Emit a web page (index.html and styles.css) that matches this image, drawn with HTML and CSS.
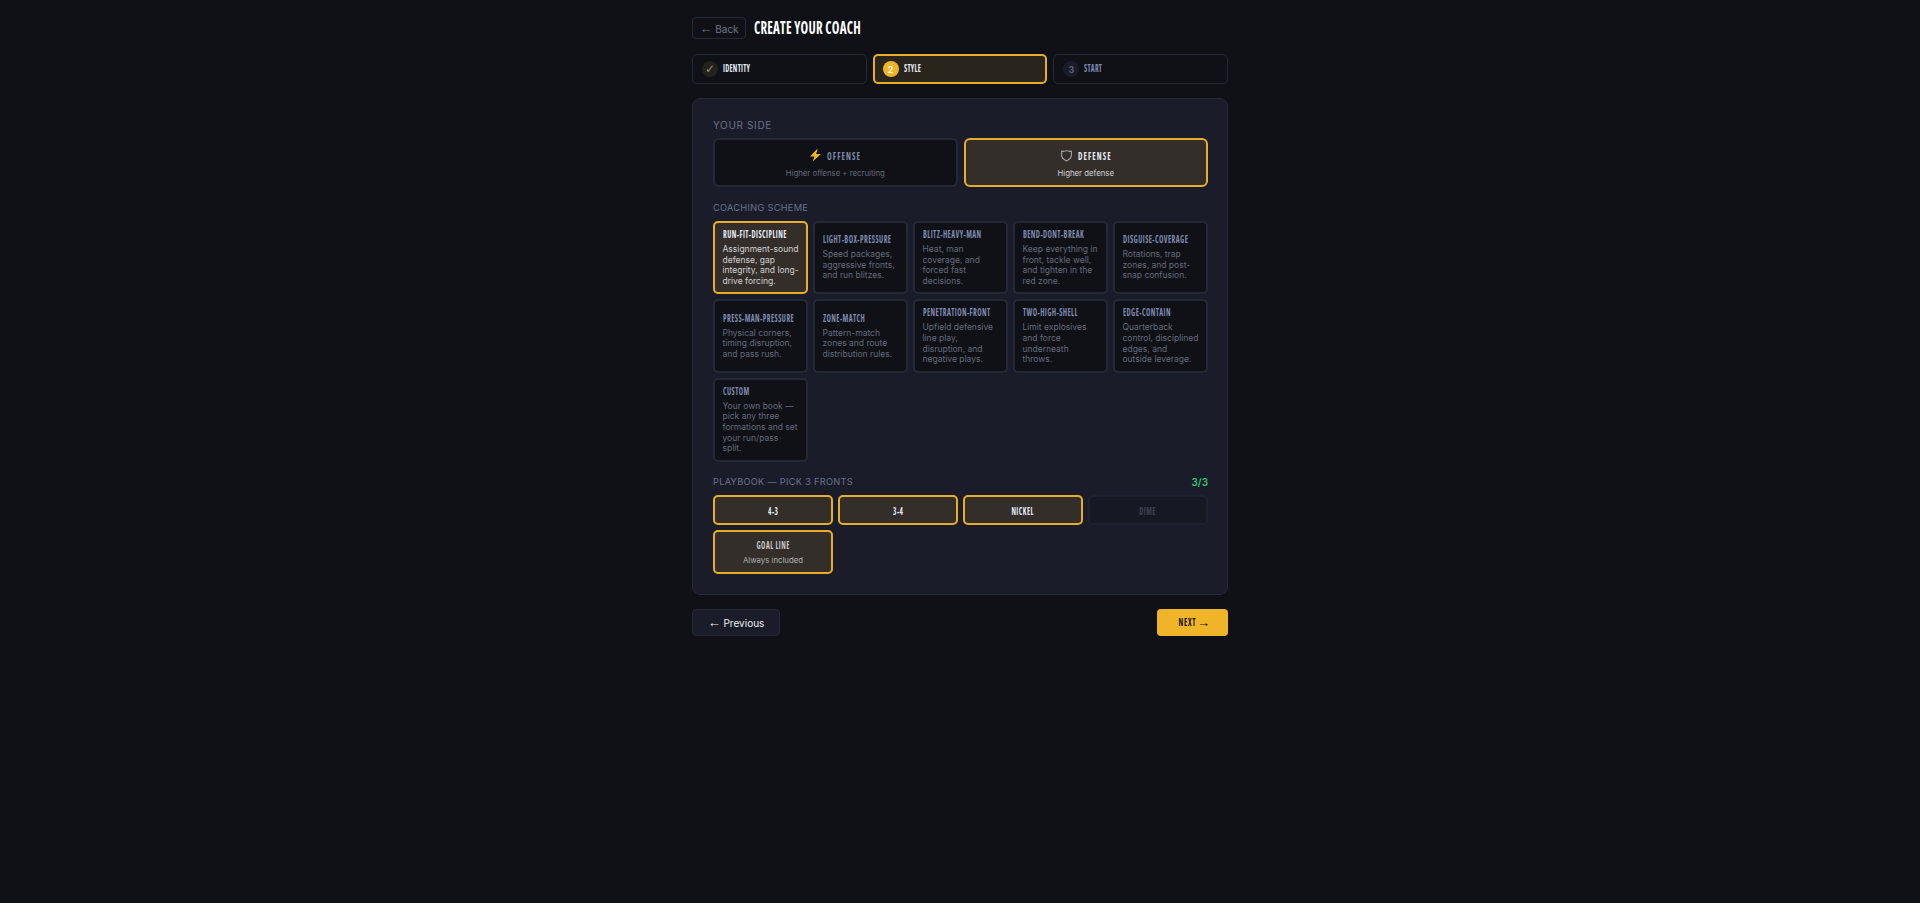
FILE: index.html
```html
<!DOCTYPE html>
<html lang="en">
<head>
    <meta charset="UTF-8">
    <meta name="viewport" content="width=device-width, initial-scale=1.0">
    <title>Create Your Coach</title>
    <link rel="stylesheet" href="styles.css">
</head>
<body>
    <div class="wizard">
        <div class="top-row">
            <button class="back-btn"><span class="arrow">←</span> Back</button>
            <h1 class="cond">Create Your Coach</h1>
        </div>

        <div class="steps">
            <div class="step done"><span class="step-num">✓</span><span class="step-name cond">Identity</span></div>
            <div class="step active"><span class="step-num">2</span><span class="step-name cond">Style</span></div>
            <div class="step"><span class="step-num">3</span><span class="step-name cond">Start</span></div>
        </div>

        <div class="panel">
            <div class="section-label side-label">Your Side</div>
            <div class="side-grid">
                <button class="side-card">
                    <span class="side-title">
                        <svg class="side-icon" viewBox="0 0 24 24"><path class="bolt" d="M14 1 2 14h8l-3 9 15-14h-9l3-8z"/></svg>
                        <span class="side-name cond">Offense</span>
                    </span>
                    <span class="side-sub">Higher offense + recruiting</span>
                </button>
                <button class="side-card selected">
                    <span class="side-title">
                        <svg class="side-icon" viewBox="0 0 24 24"><path class="shield" d="M3 4q5 1 9-1 4 2 9 1v8c0 5-5 8-9 10-4-2-9-5-9-10V4z"/></svg>
                        <span class="side-name cond">Defense</span>
                    </span>
                    <span class="side-sub">Higher defense</span>
                </button>
            </div>

            <div class="section-label">Coaching Scheme</div>
            <div class="scheme-grid">
                <button class="scheme-card selected"><span class="scheme-name cond">Run-Fit-Discipline</span><span class="scheme-desc">Assignment-sound defense, gap integrity, and long-drive forcing.</span></button>
                <button class="scheme-card"><span class="scheme-name cond">Light-Box-Pressure</span><span class="scheme-desc">Speed packages, aggressive fronts, and run blitzes.</span></button>
                <button class="scheme-card"><span class="scheme-name cond">Blitz-Heavy-Man</span><span class="scheme-desc">Heat, man coverage, and forced fast decisions.</span></button>
                <button class="scheme-card"><span class="scheme-name cond">Bend-Dont-Break</span><span class="scheme-desc">Keep everything in front, tackle well, and tighten in the red zone.</span></button>
                <button class="scheme-card"><span class="scheme-name cond">Disguise-Coverage</span><span class="scheme-desc">Rotations, trap zones, and post-snap confusion.</span></button>
                <button class="scheme-card"><span class="scheme-name cond">Press-Man-Pressure</span><span class="scheme-desc">Physical corners, timing disruption, and pass rush.</span></button>
                <button class="scheme-card"><span class="scheme-name cond">Zone-Match</span><span class="scheme-desc">Pattern-match zones and route distribution rules.</span></button>
                <button class="scheme-card"><span class="scheme-name cond">Penetration-Front</span><span class="scheme-desc">Upfield defensive line play, disruption, and negative plays.</span></button>
                <button class="scheme-card"><span class="scheme-name cond">Two-High-Shell</span><span class="scheme-desc">Limit explosives and force underneath throws.</span></button>
                <button class="scheme-card"><span class="scheme-name cond">Edge-Contain</span><span class="scheme-desc">Quarterback control, disciplined edges, and outside&nbsp;leverage.</span></button>
                <button class="scheme-card"><span class="scheme-name cond">Custom</span><span class="scheme-desc">Your own book — pick any three formations and set your run/pass split.</span></button>
            </div>

            <div class="playbook-head">
                <div class="section-label">Playbook — Pick 3 Fronts</div>
                <div class="pick-count">3/3</div>
            </div>
            <div class="front-grid">
                <button class="front-btn selected"><span class="front-name cond">4-3</span></button>
                <button class="front-btn selected"><span class="front-name cond">3-4</span></button>
                <button class="front-btn selected"><span class="front-name cond">Nickel</span></button>
                <button class="front-btn disabled"><span class="front-name cond">Dime</span></button>
                <button class="front-btn selected locked"><span class="front-name cond">Goal Line</span><span class="front-note">Always included</span></button>
            </div>
        </div>

        <div class="nav-row">
            <button class="prev-btn"><span class="arrow">←</span> Previous</button>
            <button class="next-btn"><span class="next-name cond">Next</span><span class="arrow">→</span></button>
        </div>
    </div>
</body>
</html>
```

FILE: styles.css
```css
:root {
    --bg: #0f1117;
    --panel: #1a1d29;
    --line: #252836;
    --gold: #f0b429;
    --gold-line: #e8ae2a;
    --gold-soft: #332e2a;
    --muted: #656a7a;
    --label: #6a7189;
    --slate: #7f8bb0;
}

* {
    margin: 0;
    padding: 0;
    box-sizing: border-box;
}

body {
    background: var(--bg);
    min-height: 100vh;
    font-family: Inter, "Liberation Sans", sans-serif;
    color: #fff;
}

button {
    font-family: inherit;
    color: inherit;
    cursor: pointer;
}

.arrow {
    font-family: "Liberation Sans", sans-serif;
    font-size: 1.300em;
    line-height: 1;
    font-weight: 400;
}

/* no tall condensed face is installed, so squeeze one further */
.cond {
    display: inline-block;
    font-family: "Open Sans", "Liberation Sans", sans-serif;
    font-stretch: 75%;
    font-weight: 700;
    text-transform: uppercase;
    white-space: nowrap;
    transform: scaleX(0.72);
    transform-origin: left center;
}

.wizard {
    width: 536px;
    margin: 0 auto;
    padding-top: 17px;
}

.top-row {
    display: flex;
    align-items: center;
    gap: 8px;
    height: 22px;
    margin-bottom: 15px;
}

.back-btn {
    width: 54px;
    height: 22px;
    background: transparent;
    border: 1px solid var(--line);
    border-radius: 4px;
    color: #70768a;
    font-size: 10px;
}

h1 {
    font-size: 18px;
    letter-spacing: 0.3px;
    padding-bottom: 2px;
}

.steps {
    display: grid;
    grid-template-columns: repeat(3, minmax(0, 1fr));
    gap: 6px;
    margin-bottom: 14px;
}

.step {
    display: flex;
    align-items: center;
    gap: 5px;
    height: 30px;
    padding: 0 9px;
    border: 1px solid var(--line);
    border-radius: 5px;
}

.step-num {
    display: flex;
    align-items: center;
    justify-content: center;
    width: 16px;
    height: 16px;
    border-radius: 50%;
    background: var(--panel);
    color: var(--muted);
    font-size: 9px;
    font-weight: 600;
}

.step-name {
    font-size: 10px;
    letter-spacing: 0.4px;
    padding-bottom: 2px;
    color: var(--slate);
}

.step.done .step-num {
    background: #25221d;
    color: #8f8f8f;
    font-family: "DejaVu Sans", sans-serif;
    font-size: 12px;
    font-weight: 400;
}

.step.done .step-name {
    color: #e8ecf8;
}

.step.active {
    background: #2a251c;
    border: 2px solid var(--gold-line);
    padding: 0 8px;
}

.step.active .step-num {
    background: var(--gold);
    color: #fff;
}

.step.active .step-name {
    color: #e8ecf8;
}

.panel {
    background: var(--panel);
    border: 1px solid var(--line);
    border-radius: 8px;
    padding: 19px 19px 20px 20px;
}

.section-label {
    font-size: 9.200px;
    line-height: 14px;
    letter-spacing: 0.3px;
    text-transform: uppercase;
    color: var(--label);
    margin-bottom: 6px;
}

.side-label {
    font-size: 10px;
    letter-spacing: 0.650px;
}

.side-grid {
    display: grid;
    grid-template-columns: repeat(2, minmax(0, 1fr));
    gap: 6px;
    margin-bottom: 14px;
}

.side-card {
    display: flex;
    flex-direction: column;
    align-items: center;
    justify-content: center;
    gap: 5px;
    height: 49px;
    padding-top: 1px;
    background: var(--bg);
    border: 2px solid var(--line);
    border-radius: 6px;
}

.side-title {
    display: flex;
    align-items: center;
    gap: 5px;
    line-height: 14px;
}

.side-name {
    font-size: 11px;
    letter-spacing: 1.500px;
    margin-right: -13px;
    color: var(--slate);
}

.side-icon {
    width: 13px;
    height: 13px;
}

.bolt {
    fill: var(--gold);
}

.shield {
    fill: none;
    stroke: #a8a8a8;
    stroke-width: 2;
}

.side-sub {
    font-size: 7.800px;
    line-height: 10px;
    color: var(--muted);
}

.side-card.selected {
    background: var(--gold-soft);
    border-color: var(--gold-line);
}

.side-card.selected .side-name {
    color: #e8ecf8;
}

.side-card.selected .side-sub {
    color: #d2d2d2;
}

.scheme-grid {
    display: grid;
    grid-template-columns: repeat(5, minmax(0, 1fr));
    gap: 5px;
    margin-bottom: 13px;
}

.scheme-card {
    display: flex;
    flex-direction: column;
    justify-content: center;
    align-items: flex-start;
    gap: 4px;
    min-width: 0;
    padding: 6px 7px 6px 7.500px;
    text-align: left;
    background: var(--bg);
    border: 2px solid var(--line);
    border-radius: 5px;
}

.scheme-name {
    font-size: 10.200px;
    line-height: 11px;
    letter-spacing: 0.600px;
    color: var(--slate);
}

.scheme-desc {
    font-size: 8.500px;
    line-height: 10.600px;
    color: var(--muted);
}

.scheme-card.selected {
    background: var(--gold-soft);
    border-color: var(--gold-line);
}

.scheme-card.selected .scheme-name {
    color: #e8ecf8;
}

.scheme-card.selected .scheme-desc {
    color: #d2d2d2;
}

.playbook-head {
    display: flex;
    justify-content: space-between;
    align-items: flex-start;
}

.pick-count {
    font-size: 10px;
    line-height: 14px;
    font-weight: 600;
    color: #2dc96f;
}

.front-grid {
    display: grid;
    grid-template-columns: repeat(4, minmax(0, 1fr));
    gap: 5px;
}

.front-btn {
    height: 30px;
    background: var(--bg);
    border: 2px solid var(--line);
    border-radius: 5px;
}

.front-name {
    font-size: 10px;
    line-height: 12px;
    letter-spacing: 0.700px;
    transform-origin: center;
}

.front-btn.selected {
    background: var(--gold-soft);
    border-color: var(--gold-line);
    color: #e8ecf8;
}

.front-btn.disabled {
    background: #161923;
    border-color: #1e2130;
    color: #3f4352;
}

.front-btn.locked {
    display: flex;
    flex-direction: column;
    align-items: center;
    justify-content: center;
    gap: 4px;
    height: 44px;
    color: #c8c8c8;
}

.front-note {
    font-size: 7.800px;
    line-height: 10px;
    color: #b0b0b0;
}

.nav-row {
    display: flex;
    justify-content: space-between;
    margin-top: 14px;
}

.prev-btn {
    width: 88px;
    height: 27px;
    background: var(--panel);
    border: 1px solid var(--line);
    border-radius: 4px;
    color: #eceef2;
    font-size: 10px;
}

.next-btn {
    display: flex;
    align-items: center;
    justify-content: center;
    width: 71px;
    height: 27px;
    background: var(--gold);
    border: none;
    border-radius: 4px;
    color: #111;
    font-size: 10px;
}

.next-name {
    font-size: 10.500px;
    letter-spacing: 1.100px;
    margin-right: -3px;
    transform-origin: center;
}
```
